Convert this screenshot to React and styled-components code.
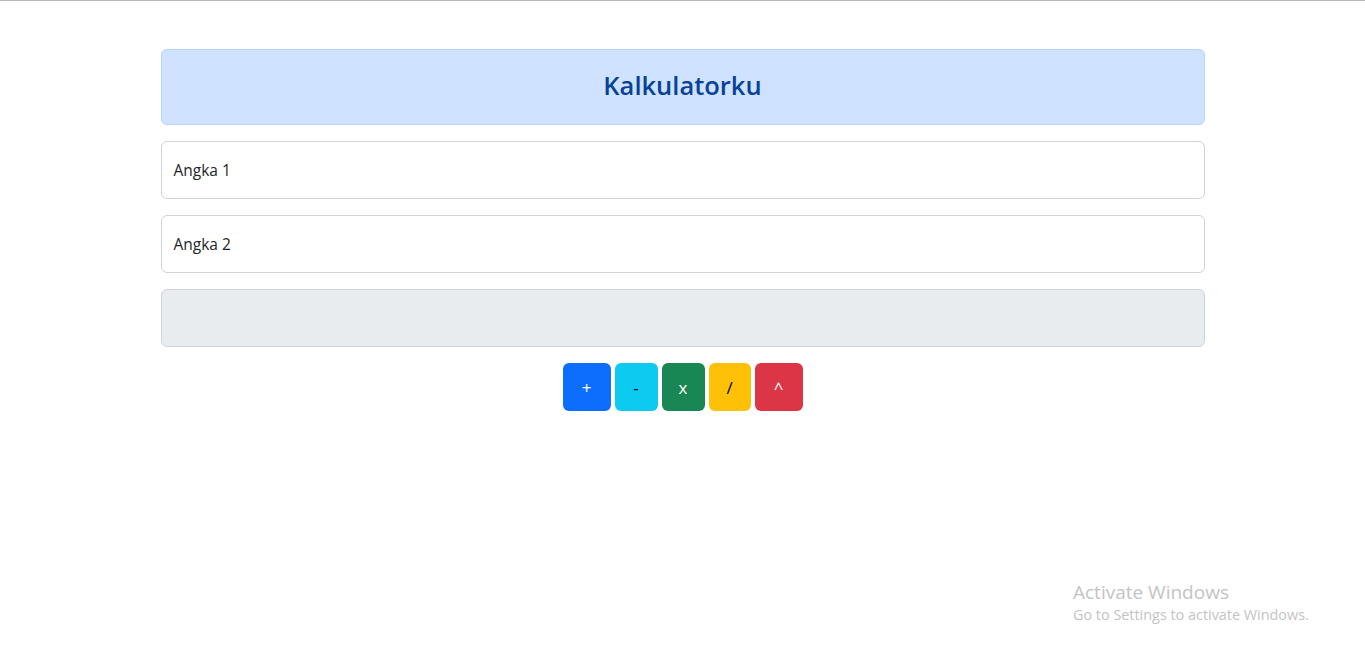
import React from "react";
import styled, { createGlobalStyle } from "styled-components";

const GlobalStyle = createGlobalStyle`
  html, body {
    margin: 0;
    padding: 0;
    background: #ffffff;
    font-family: "Open Sans", "Noto Sans", sans-serif;
  }
`;

const Page = styled.div`
  position: relative;
  min-height: 657px;
  border-top: 1px solid #bdb8b5;
  box-sizing: border-box;
`;

const Container = styled.div`
  width: 1044px;
  margin: 0 auto;
  padding-top: 48px;
  display: flex;
  flex-direction: column;
  gap: 16px;
`;

const Header = styled.div`
  height: 76px;
  box-sizing: border-box;
  padding-bottom: 5px;
  background: #cfe2ff;
  border: 1px solid #b6d4fe;
  border-radius: 6px;
  display: flex;
  align-items: center;
  justify-content: center;
`;

const Title = styled.h1`
  margin: 0;
  font-size: 25.5px;
  font-weight: 600;
  color: #084298;
`;

const Field = styled.div`
  height: 58px;
  box-sizing: border-box;
  border: 1px solid #ced4da;
  border-radius: 6px;
  background: ${(p) => (p.$disabled ? "#e9ecef" : "#ffffff")};
  display: flex;
  align-items: center;
  padding: 0 12px;
  font-size: 15.5px;
  color: #212529;
`;

const Buttons = styled.div`
  display: flex;
  justify-content: center;
  gap: 4px;
`;

const Button = styled.button`
  height: 48px;
  padding: 0;
  border: none;
  border-radius: 6px;
  background: ${(p) => p.$bg};
  color: ${(p) => p.$fg};
  font-family: "Open Sans", "Noto Sans", sans-serif;
  font-size: 17px;
  font-weight: 500;
  cursor: pointer;
`;

const Watermark = styled.div`
  position: absolute;
  left: 1073px;
  top: 579px;
  color: #c4c4c4;
  font-family: "Open Sans", "Noto Sans", sans-serif;
`;

const WmTitle = styled.div`
  font-size: 19px;
  line-height: 24px;
`;

const WmSub = styled.div`
  font-size: 14.4px;
  line-height: 21px;
`;

const ops = [
  { label: "+", bg: "#0d6efd", fg: "#ffffff", w: 48 },
  { label: "-", bg: "#0dcaf0", fg: "#000000", w: 43 },
  { label: "x", bg: "#198754", fg: "#ffffff", w: 43 },
  { label: "/", bg: "#ffc107", fg: "#000000", w: 42 },
  { label: "^", bg: "#dc3545", fg: "#ffffff", w: 48 },
];

export default function App() {
  return (
    <Page>
      <GlobalStyle />
      <Container>
        <Header>
          <Title>Kalkulatorku</Title>
        </Header>
        <Field>Angka 1</Field>
        <Field>Angka 2</Field>
        <Field $disabled />
        <Buttons>
          {ops.map((op) => (
            <Button
              key={op.label}
              $bg={op.bg}
              $fg={op.fg}
              style={{ width: op.w }}
            >
              {op.label}
            </Button>
          ))}
        </Buttons>
      </Container>
      <Watermark>
        <WmTitle>Activate Windows</WmTitle>
        <WmSub>Go to Settings to activate Windows.</WmSub>
      </Watermark>
    </Page>
  );
}
